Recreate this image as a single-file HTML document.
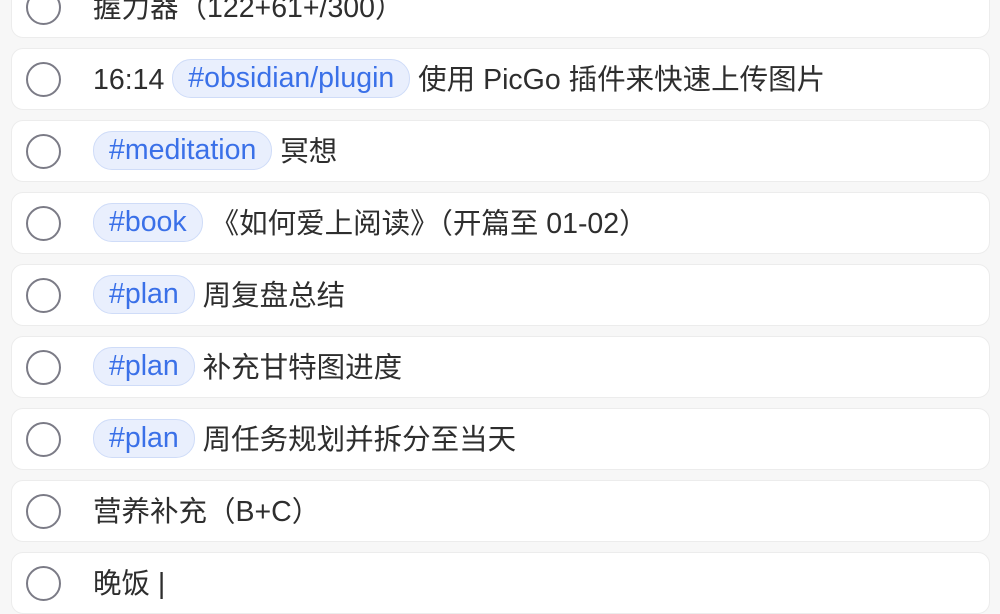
<!DOCTYPE html>
<html><head><meta charset="utf-8"><style>
html,body{margin:0;padding:0;background:#f7f7f7;width:1000px;height:606px;overflow:hidden;}
.card{position:absolute;left:11px;width:979px;height:62px;background:#fff;border:1px solid #ececec;border-radius:12px;box-sizing:border-box;}
.c{position:absolute;left:14px;top:13px;width:35px;height:35px;border:2.6px solid #7b7b86;border-radius:50%;box-sizing:border-box;}
.t{position:absolute;left:81px;top:1px;height:60px;line-height:60px;font-family:"Liberation Sans","Noto Sans CJK SC",sans-serif;font-size:28.5px;color:#2e2e2e;white-space:nowrap;}
.tag{display:inline-block;background:#e9effd;border:1px solid #cfdcf8;color:#3a70e8;border-radius:19px;height:37px;line-height:37px;padding:0 15px;vertical-align:middle;margin-top:-5px;}
</style></head><body>
<div class="card" style="top:-24px"><div class="c"></div><div class="t">握力器（122+61+/300）</div></div>
<div class="card" style="top:48px"><div class="c"></div><div class="t">16:14 <span class="tag">#obsidian/plugin</span> 使用 PicGo 插件来快速上传图片</div></div>
<div class="card" style="top:120px"><div class="c"></div><div class="t"><span class="tag">#meditation</span> 冥想</div></div>
<div class="card" style="top:192px"><div class="c"></div><div class="t"><span class="tag">#book</span> 《如何爱上阅读》（开篇至 01-02）</div></div>
<div class="card" style="top:264px"><div class="c"></div><div class="t"><span class="tag">#plan</span> 周复盘总结</div></div>
<div class="card" style="top:336px"><div class="c"></div><div class="t"><span class="tag">#plan</span> 补充甘特图进度</div></div>
<div class="card" style="top:408px"><div class="c"></div><div class="t"><span class="tag">#plan</span> 周任务规划并拆分至当天</div></div>
<div class="card" style="top:480px"><div class="c"></div><div class="t">营养补充（B+C）</div></div>
<div class="card" style="top:552px"><div class="c"></div><div class="t">晚饭 |</div></div>
</body></html>
